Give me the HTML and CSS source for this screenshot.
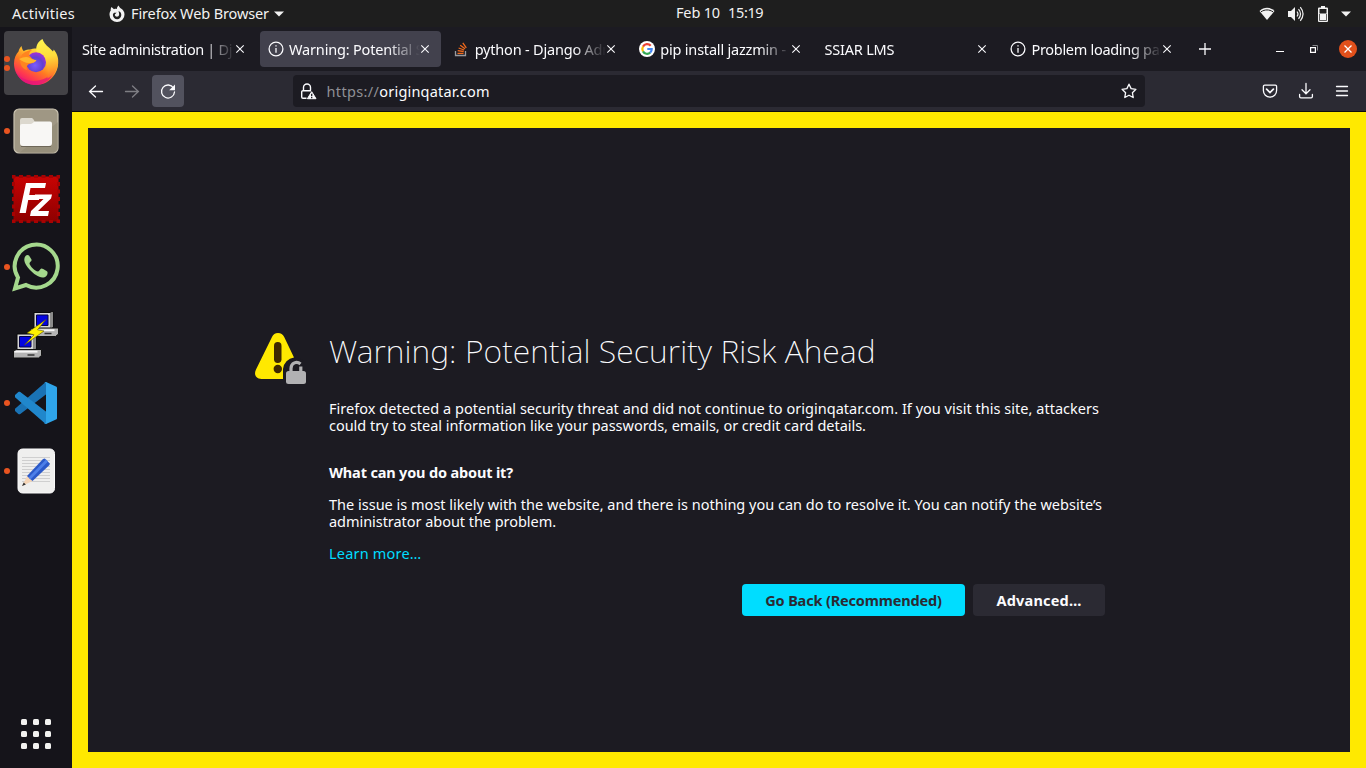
FILE: index.html
```html
<!DOCTYPE html>
<html lang="en">
<head>
<meta charset="utf-8">
<title>Warning: Potential Security Risk Ahead</title>
<link rel="stylesheet" href="styles.css">
</head>
<body>
<header class="topbar">
  <span class="activities"><span class="t-act">Activities</span></span>
  <span class="appmenu">
    <svg width="16" height="18" viewBox="0 0 16 18"><path d="M2.500 2 5 4.200c1-.5 2-.5 3-.3C7.800 2.500 8.500 1.200 9.800.4c.2 1.500 1.200 2.200 2.200 3.100 2 1.300 3.500 3.300 3.500 6A7.500 7.500 0 0 1 .5 9.700C.5 7.500 1 6.500 1.800 5.500 1.500 4.300 1.900 3 2.500 2Z" fill="#f2f2f2"/><path d="M9.500 6c2 .8 2.800 2.200 2.800 4a4.200 4.200 0 0 1-8.400 0c0-1 .5-1.700 1.200-2.300.8.3 1.500.2 2.400-.2-.3 1-1.700 1.200-1.700 2.600a2.200 2.200 0 0 0 4.300 0c.2-1.500-.3-2.900-.6-4.100Z" fill="#1f1f1f"/></svg>
    <span class="t-app">Firefox Web Browser</span>
    <svg class="caret" width="10" height="6" viewBox="0 0 10 6"><path d="M0 .5h10L5 5.500Z" fill="#f2f2f2"/></svg>
  </span>
  <span class="clock"><span class="t-day">Feb 10</span><span class="t-time">15:19</span></span>
  <span class="tray">
    <svg width="16" height="14" viewBox="0 0 16 14"><path d="M.5 4C5-.2 11-.2 15.500 4L8 13Z" fill="#f2f2f2"/><path d="M2 4.800c3.800-2.500 8.200-2.500 12 0" fill="none" stroke="#1f1f1f" stroke-width="1"/></svg>
    <svg width="16" height="16" viewBox="0 0 16 16"><path d="M0 5h3l4-4v14l-4-4H0Z" fill="#f2f2f2"/><path d="M9 5.500q2 2.500 0 5M10.500 3.200q4 4.800 0 9.600M12.300 1.200q5.500 6.800 0 13.600" fill="none" stroke="#f2f2f2" stroke-width="1.200"/></svg>
    <svg class="battery" width="10" height="16" viewBox="0 0 10 16"><path d="M3 0h4v1.500h2a1 1 0 0 1 1 1V15a1 1 0 0 1-1 1H1a1 1 0 0 1-1-1V2.500a1 1 0 0 1 1-1h2Z" fill="#f2f2f2"/><path d="M1.500 3h7v4.500h-7Z" fill="#1f1f1f"/><path d="M1.500 8v6.500h7V8" fill="none" stroke="#1f1f1f" stroke-width=".7"/></svg>
    <svg width="10" height="6" viewBox="0 0 10 6"><path d="M0 .5h10L5 5.500Z" fill="#f2f2f2"/></svg>
  </span>
</header>
<div class="desktop">
<nav class="dock">
  <div class="app active"><i class="dots"><b></b><b></b></i>
    <svg width="48" height="48" viewBox="0 0 48 48">
      <defs>
        <linearGradient id="fx" x1=".85" y1=".1" x2=".25" y2="1"><stop offset="0" stop-color="#fff44f"/><stop offset=".3" stop-color="#ffc02e"/><stop offset=".55" stop-color="#ff7a22"/><stop offset=".8" stop-color="#ff3750"/><stop offset="1" stop-color="#e3127a"/></linearGradient>
        <radialGradient id="globe" cx=".45" cy=".65" r=".65"><stop offset="0" stop-color="#7a5cff"/><stop offset=".6" stop-color="#6340d0"/><stop offset="1" stop-color="#a52fd8"/></radialGradient>
        <linearGradient id="tail" x1=".4" y1="0" x2=".5" y2="1"><stop offset="0" stop-color="#fff44f"/><stop offset=".45" stop-color="#ffdc3c"/><stop offset=".75" stop-color="#ffa52a"/><stop offset="1" stop-color="#ff6a2a"/></linearGradient>
      </defs>
      <path d="M9.500 7c.5 2.500 1 4 2.300 5C14 10.800 16 10.600 18 10.600 20 9.500 25 9 30 10c8 0 14.500 5 16 12C47 35.500 36 46 24 46S2 36.500 2 24.500c0-5.500 2-9.500 4.500-12C7 10 8.500 8 9.500 7Z" fill="url(#fx)"/>
      <path d="M3.500 32c5 9 15 11.500 25 9 7-2 12-6 15-11-3 9-10 16-20 16C14 46 7 41 3.500 32Z" fill="#e5147b" opacity=".75"/>
      <path d="M30.500 0c1 3 3 6 7 9l3.500 3.500.8-2c3.500 4.500 5 8.500 4.300 14.500-1 7-5 12-11 14.500 2-4 1.500-9 .5-13C34.500 20 26 17.500 24.500 12 23.500 7 26 2.500 30.500 0Z" fill="url(#tail)"/>
      <circle cx="24" cy="23.300" r="10" fill="url(#globe)"/>
      <path d="M10 15.500c3-3 7-4.500 10-4.500-2 1-3 3-3 5 2 3 4.500 5 7 5-1 3-4 3-7 4-2 1-3 3-2 6-6-1-9-9-5-15.500Z" fill="#ff8420"/>
      <path d="M7 20c4-2 8-3 11-1 2 1.500 4 2 6.500 2-1.500 3-4.500 3-7.500 3-4 0-7-2-10-4Z" fill="#ffb52c"/>
    </svg></div>
  <div class="app"><i class="dots"><b></b></i>
    <svg width="48" height="48" viewBox="0 0 48 48"><rect x="2" y="2" width="44" height="44" rx="5" fill="#9f9784" stroke="#c9c2b0" stroke-width="1.200"/><path d="M46 15V41a5 5 0 0 1-5 5H7Z" fill="#8c8472" opacity=".45"/><path d="M8 13a2 2 0 0 1 2-2h9c1.500 0 2 .6 2.500 1.500L23 15v8H8Z" fill="#dcd8ce"/><path d="M8 19a2 2 0 0 1 2-2h9c1.500 0 2.500-2.500 4-2.500h15a2 2 0 0 1 2 2V36a3 3 0 0 1-3 3H11a3 3 0 0 1-3-3Z" fill="#f8f7f5"/><path d="M9 39.500h30" stroke="#6e6758" stroke-width="1"/></svg></div>
  <div class="app">
    <svg width="48" height="48" viewBox="0 0 48 48"><defs><linearGradient id="fz" x1="0" y1="0" x2="0" y2="1"><stop offset="0" stop-color="#c80303"/><stop offset="1" stop-color="#8e0000"/></linearGradient></defs><rect x="1.500" y="1.500" width="45" height="45" fill="url(#fz)"/><rect x="1.500" y="1.500" width="45" height="45" fill="none" stroke="#a80202" stroke-width="3" stroke-dasharray="4 3.500" stroke-dashoffset="2"/><path d="M14 8h20l-1 5H18.500l-1.300 7H28l-1 5H16.200l-2.400 13H7.500Z" fill="#fff"/><path d="M23 19.500h17l-1 4L26 36h11l-1 5H18l1-5L31.500 24H22Z" fill="#fff"/></svg></div>
  <div class="app"><i class="dots"><b></b></i>
    <svg width="48" height="48" viewBox="0 0 48 48"><path d="M3 45.500 6 34.500A21.500 21.500 0 1 1 14 42Z" fill="none" stroke="#a5d88d" stroke-width="4"/><path d="M17 12.500c-1-1-2.500-.7-3.500.5-3 4 0 9 4 13.500 4 4.300 9 8 13 8 3 0 5.500-2 5-5.500-.2-1-5-3.500-6-3.500-1.400 0-2 3-3.500 3-3 0-8.500-6-8.500-8 0-1.500 2.500-2.200 2-4Z" fill="#a5d88d"/></svg></div>
  <div class="app">
    <svg width="48" height="48" viewBox="0 0 48 48"><defs><g id="pc"><path d="M4.500 1.500h16l3-1v16l-3 1.500h-16Z" fill="#d6d6d6" stroke="#080808"/><path d="M20.500 2l3-1v15l-3 1.500Z" fill="#8a8a8a"/><path d="M7 4h11.500v10.500H7Z" fill="#0505e0" stroke="#050544"/><path d="M1 18.500 4 17h25v6l-3 2.500H1Z" fill="#b4b4b4" stroke="#111"/><path d="M2 19.200h23" stroke="#f7f7f7" stroke-width="1.800"/><path d="M15 22.500h7" stroke="#333" stroke-width="1.500"/></g></defs><use href="#pc" x="17.500" y="0"/><use href="#pc" x=".5" y="21.500"/><path d="M34 8.500 15 22l7 1.800L12.500 34 32 20l-6.500-1.200Z" fill="#fff200" stroke="#5b5300" stroke-width=".6"/></svg></div>
  <div class="app"><i class="dots"><b></b></i>
    <svg width="48" height="48" viewBox="0 0 48 48"><path d="m3 32 3.300 3c.6.400 1.500.4 2 0L34.500 15V3l-2 1L3 29.800Z" fill="#1a73b5"/><path d="m3 16 3.300-3c.6-.4 1.500-.4 2 0L34.500 33v12l-2-1L3 18.200Z" fill="#2087cc"/><path d="M34 3 44 7.500c.8.4 1 .9 1 1.600v29.800c0 .7-.2 1.200-1 1.600L34 45c-.8.2-1.500 0-2-.5 1 .4 2-.2 2-1.500V5c0-1.300-1-1.900-2-1.500.5-.5 1.200-.7 2-.5Z" fill="#2fa5ea"/></svg></div>
  <div class="app"><i class="dots"><b></b></i>
    <svg width="48" height="48" viewBox="0 0 48 48"><rect x="6" y="2" width="36.500" height="44" rx="4.500" fill="#efefee" stroke="#fafafa"/><path d="M10 10.500h28M10 13.500h28M10 16.500h28M10 19.500h28M10 22.500h28M10 25.500h28M10 28.500h28M10 31.500h28M10 34.500h28" stroke="#cfcfcf" stroke-width="1"/><path d="M10 39 15.500 28.500 20.500 34Z" fill="#f5d5b7"/><path d="m10 39 1.700-3.500 2.200 2Z" fill="#333"/><path d="m15 29 16-17 1.800-.5 5 5-.3 1.500L20.500 34Z" fill="#2b59c8"/><path d="m16.500 30.500 17.500-18 2 2-17.500 18Z" fill="#4d7fe8"/></svg></div>
  <div class="grid"><b></b><b></b><b></b><b></b><b></b><b></b><b></b><b></b><b></b></div>
</nav>
<main class="browser">
  <div class="tabs">
    <div class="tab"><span class="label t-tab1">Site administration | Dj</span><svg class="x" viewBox="0 0 8 8"><path d="M.3.3l7.400 7.400M7.700.3.300 7.700"/></svg></div>
    <div class="tab selected"><svg class="info" viewBox="0 0 16 16"><circle cx="8" cy="8" r="6.900"/><path d="M8 7v4.700M8 4.200v1.400"/></svg><span class="label t-tab2">Warning: Potential S</span><svg class="x" viewBox="0 0 8 8"><path d="M.3.3l7.400 7.400M7.700.3.300 7.700"/></svg></div>
    <div class="tab"><svg class="fav" viewBox="0 0 16 16"><path d="M2.500 10v4.500h10V10" fill="none" stroke="#9a9a9e" stroke-width="1.300"/><path d="M4.500 12.300h6M4.700 9.700l6 .8M5.600 7l5.600 2M7.200 4.200l4.800 3.600M9.800 1.800l3.500 5" stroke="#f26a1b" stroke-width="1.300"/></svg><span class="label t-tab3">python - Django Adm</span><svg class="x" viewBox="0 0 8 8"><path d="M.3.3l7.400 7.400M7.700.3.300 7.700"/></svg></div>
    <div class="tab"><svg class="fav" viewBox="0 0 16 16"><circle cx="8" cy="8" r="8" fill="#fff"/><g fill="none" stroke-width="2.200"><path d="M11.700 4.800A4.700 4.700 0 0 0 4 5.600" stroke="#ea4335"/><path d="M4 5.600a4.700 4.700 0 0 0 0 4.800" stroke="#fbbc05"/><path d="M4 10.400a4.700 4.700 0 0 0 7.200 1.200" stroke="#34a853"/><path d="M11.200 11.600A4.500 4.500 0 0 0 12.700 8H8.300" stroke="#4285f4"/></g></svg><span class="label t-tab4">pip install jazzmin - G</span><svg class="x" viewBox="0 0 8 8"><path d="M.3.3l7.400 7.400M7.700.3.300 7.700"/></svg></div>
    <div class="tab"><span class="label t-tab5">SSIAR LMS</span><svg class="x" viewBox="0 0 8 8"><path d="M.3.3l7.400 7.400M7.700.3.300 7.700"/></svg></div>
    <div class="tab"><svg class="info" viewBox="0 0 16 16"><circle cx="8" cy="8" r="6.900"/><path d="M8 7v4.700M8 4.200v1.400"/></svg><span class="label t-tab6">Problem loading pag</span><svg class="x" viewBox="0 0 8 8"><path d="M.3.3l7.400 7.400M7.700.3.300 7.700"/></svg></div>
    <svg class="plus" width="12" height="12" viewBox="0 0 12 12"><path d="M6 0v12M0 6h12" stroke="#fbfbfe" stroke-width="1.300"/></svg>
    <div class="wincontrols">
      <svg width="8" height="8" viewBox="0 0 8 8"><path d="M0 6.500h8" stroke="#fff"/></svg>
      <svg width="8" height="8" viewBox="0 0 8 8"><path d="M.6 2.600h4.800v4.800H.6Z" fill="none" stroke="#fff" stroke-width="1.200"/><path d="M2.500.5h5v5" fill="none" stroke="#88888c"/></svg>
      <svg width="18" height="18" viewBox="0 0 18 18"><circle cx="9" cy="9" r="9" fill="#e2501b"/><path d="m5.500 5.500 7 7m0-7-7 7" stroke="#fff" stroke-width="1.300"/></svg>
    </div>
  </div>
  <div class="toolbar">
    <div class="nav">
      <span><svg class="ic" viewBox="0 0 16 16"><path d="M14.500 8.500H1.800M7.500 3 1.600 8.500l5.900 5.500"/></svg></span>
      <span class="off"><svg class="ic" viewBox="0 0 16 16"><path d="M1.500 8.500h12.700M8.500 3l5.900 5.500L8.500 14"/></svg></span>
      <span class="on"><svg class="ic" viewBox="0 0 16 16"><path d="M13.500 5A6.500 6.500 0 1 0 14.500 9"/><path d="M15 1.500v5.800H9.200Z" fill="#fbfbfe" stroke="none"/></svg></span>
    </div>
    <div class="urlbar">
      <svg class="lock" width="16" height="17" viewBox="0 0 16 17"><g fill="none" stroke="#fbfbfe" stroke-width="1.400"><path d="M2.500 7.500V4.500a3.500 3.500 0 0 1 7 0v3"/><path d="M5.500 15.300H2a1.300 1.300 0 0 1-1.300-1.300V9A1.300 1.300 0 0 1 2 7.700h8"/></g><path d="M10.700 8.700 15 15.700H6.400Z" fill="#fbfbfe" stroke="#fbfbfe" stroke-width="1" stroke-linejoin="round"/><path d="M10.700 10.700v2.500m0 .8v1.200" stroke="#1c1b22" stroke-width="1.300"/></svg>
      <span class="url"><span class="t-scheme">https://</span><span class="t-host">originqatar.com</span></span>
      <svg class="ic" viewBox="0 0 16 16"><path d="m8 1.200 2.100 4.400 4.800.7-3.500 3.400.8 4.800L8 12.200l-4.200 2.300.8-4.800L1.100 6.300l4.800-.7Z" stroke-linejoin="round"/></svg>
    </div>
    <div class="tools">
      <svg class="ic" viewBox="0 0 16 16"><path d="M2.700 2.200h10.600a1.300 1.300 0 0 1 1.300 1.300v4a6.600 6.600 0 0 1-13.200 0v-4a1.300 1.300 0 0 1 1.300-1.300Z"/><path d="m4.600 6.200 3.400 3.300 3.400-3.300" stroke-width="1.700"/></svg>
      <svg class="ic" viewBox="0 0 16 16"><path d="M8 .5v10M4 6.800l4 4 4-4M1.600 11.500v2a1.300 1.300 0 0 0 1.300 1.300h10.200a1.300 1.300 0 0 0 1.300-1.300v-2"/></svg>
      <svg class="ic" viewBox="0 0 16 16"><path d="M2.500 3.500h11M2.500 8h11M2.500 12.500h11"/></svg>
    </div>
  </div>
  <section class="viewport">
    <div class="notice">
      <svg class="warn" width="52" height="52" viewBox="0 0 52 52"><path d="M23 0c3 0 4.800 1.300 6.200 4l9.800 20.500A13 13 0 0 0 28 36v10H6.500C1 46-1.500 41.500 1 36.500L17 4C18.300 1.300 20 0 23 0Z" fill="#ffe900"/><rect x="19" y="9" width="7.500" height="21" rx="3.700" fill="#3e2800"/><circle cx="22.800" cy="36" r="4.200" fill="#3e2800"/><path d="M36 39v-3.500c0-6 6-7.500 9.500-4.500" fill="none" stroke="#1c1b22" stroke-width="9"/><path d="M36 39v-3.500c0-6 6-7.500 9.500-4.500M45.800 33.500V39" fill="none" stroke="#b1b1b3" stroke-width="3.200"/><rect x="31" y="38" width="20" height="13" rx="2.500" fill="#b1b1b3"/></svg>
      <div class="copy">
        <h1><span class="t-title">Warning: Potential Security Risk Ahead</span></h1>
        <p class="p1"><span class="t-l1">Firefox detected a potential security threat and did not continue to originqatar.com. If you visit this site, attackers</span><br><span class="t-l2">could try to steal information like your passwords, emails, or credit card details.</span></p>
        <h2><span class="t-h2">What can you do about it?</span></h2>
        <p class="p2"><span class="t-l3">The issue is most likely with the website, and there is nothing you can do to resolve it. You can notify the website’s</span><br><span class="t-l4">administrator about the problem.</span></p>
        <a class="more">Learn more…</a>
        <div class="actions"><button class="primary">Go Back (Recommended)</button><button class="advanced">Advanced…</button></div>
      </div>
    </div>
  </section>
</main>
</div>
</body>
</html>
```
FILE: styles.css
```css
* { box-sizing: border-box; }
body { margin: 0; width: 1366px; height: 768px; overflow: hidden; background: #1c1b22; color: #fbfbfe; font: 14.5px/17px "Noto Sans", "Open Sans", sans-serif; }
svg { display: block; flex: none; overflow: visible; }
.topbar { height: 27px; background: #1e1e1e; color: #f2f2f2; display: grid; grid-template-columns: 109px 567px 1fr 107px; align-items: center; white-space: nowrap; }
.activities { padding-left: 12px; }
.t-act { letter-spacing: .258px; }
.appmenu { display: flex; align-items: center; }
.appmenu > span { width: 138px; margin-left: 6px; letter-spacing: -.12px; }
.caret { margin-left: 5px; }
.clock { display: flex; gap: 8px; padding-bottom: 2px; }
.t-day { letter-spacing: -.164px; }
.t-time { letter-spacing: -.35px; }
.tray { display: flex; align-items: center; gap: 13px; }
.battery { margin-left: 1px; }
.desktop { display: flex; height: 741px; }
.dock { width: 72px; padding: 4px; background: #15141a; display: flex; flex-direction: column; gap: 4px; }
.app { width: 64px; height: 64px; border-radius: 4px; display: flex; align-items: center; justify-content: center; position: relative; }
.active { background: #434246; }
.dots { position: absolute; left: 0; top: 0; height: 64px; display: flex; flex-direction: column; gap: 3px; justify-content: center; }
.dots b { width: 6px; height: 6px; border-radius: 50%; background: #e95420; }
.grid { margin: auto auto 15px; display: grid; grid-template-columns: repeat(3, 6px); gap: 6px; }
.grid b { width: 6px; height: 6px; border-radius: 1.500px; background: #f2f2f0; }
.browser { flex: 1; min-width: 0; display: flex; flex-direction: column; }
.tabs { height: 44px; padding: 4px 9px 4px 2.500px; display: flex; align-items: center; gap: 4.600px; }
.tab { width: 181px; height: 36px; padding: 0 12px 0 7.500px; border-radius: 4px; display: flex; align-items: center; flex: none; }
.selected { background: #42414d; }
.label { flex: 1; min-width: 0; overflow: hidden; white-space: nowrap; line-height: 20px; mask-image: linear-gradient(to left, transparent, #000 32px); }
.t-tab1 { letter-spacing: -.353px; }
.t-tab2 { letter-spacing: -.185px; }
.t-tab3 { letter-spacing: -.2px; }
.t-tab4 { letter-spacing: -.2px; }
.t-tab5 { letter-spacing: -.179px; }
.t-tab6 { letter-spacing: -.301px; }
.x { width: 8px; height: 8px; margin-left: 1px; stroke: #fbfbfe; stroke-width: 1.100; fill: none; }
.info, .fav { width: 16px; height: 16px; margin-right: 5.500px; }
.info { fill: none; stroke: #fbfbfe; stroke-width: 1.300; }
.plus { margin-left: 11px; }
.wincontrols { margin-left: auto; display: flex; align-items: center; gap: 26px; }
.wincontrols svg:last-child { margin-left: -5px; }
.toolbar { height: 41px; background: #2b2a33; border-bottom: 1px solid #0c0c0d; display: flex; align-items: center; }
.nav { width: 221px; padding-left: 8px; display: flex; gap: 4px; }
.nav span { width: 32px; height: 32px; border-radius: 4px; display: flex; align-items: center; justify-content: center; }
.nav .on { background: #52525e; }
.nav .off { opacity: .4; }
.ic { width: 16px; height: 16px; fill: none; stroke: #fbfbfe; stroke-width: 1.300; stroke-linecap: round; }
.urlbar { width: 852px; height: 32px; padding: 0 8px; border-radius: 4px; background: #1c1b22; display: flex; align-items: center; }
.url { flex: 1; padding-left: 9.500px; display: flex; white-space: nowrap; }
.t-scheme { color: #8f8f95; letter-spacing: .35px; }
.t-host { letter-spacing: .2px; }
.tools { margin-left: auto; padding-right: 16px; display: flex; gap: 20px; }
.viewport { flex: 1; border: 16px solid #ffe900; background: #1c1b22; }
.notice { padding: 205px 0 0 167px; display: flex; gap: 22px; white-space: nowrap; }
.copy { width: 776px; }
h1, h2, p { margin: 0; }
h1 { font: 200 32px/36px "Noto Sans", sans-serif; height: 67px; }
.t-title { letter-spacing: .08px; }
.p1 { height: 64px; }
.t-l1 { letter-spacing: .024px; }
.t-l2 { letter-spacing: -.031px; }
h2 { font-size: 14.500px; line-height: 17px; font-weight: 700; height: 32px; letter-spacing: -.162px; }
.p2 { height: 49px; }
.t-l3 { letter-spacing: .007px; }
.t-l4 { letter-spacing: -.045px; }
.more { display: block; height: 39px; color: #00ddff; letter-spacing: .2px; }
.actions { display: flex; justify-content: flex-end; gap: 8px; }
button { width: 132px; height: 32px; padding: 0; border: 0; border-radius: 4px; background: #2b2a33; color: #fbfbfe; font: 700 14.500px/17px "Noto Sans", sans-serif; }
.primary { width: 223px; background: #00ddff; color: #2b2a33; letter-spacing: -.16px; }
.advanced { letter-spacing: .189px; }
```
